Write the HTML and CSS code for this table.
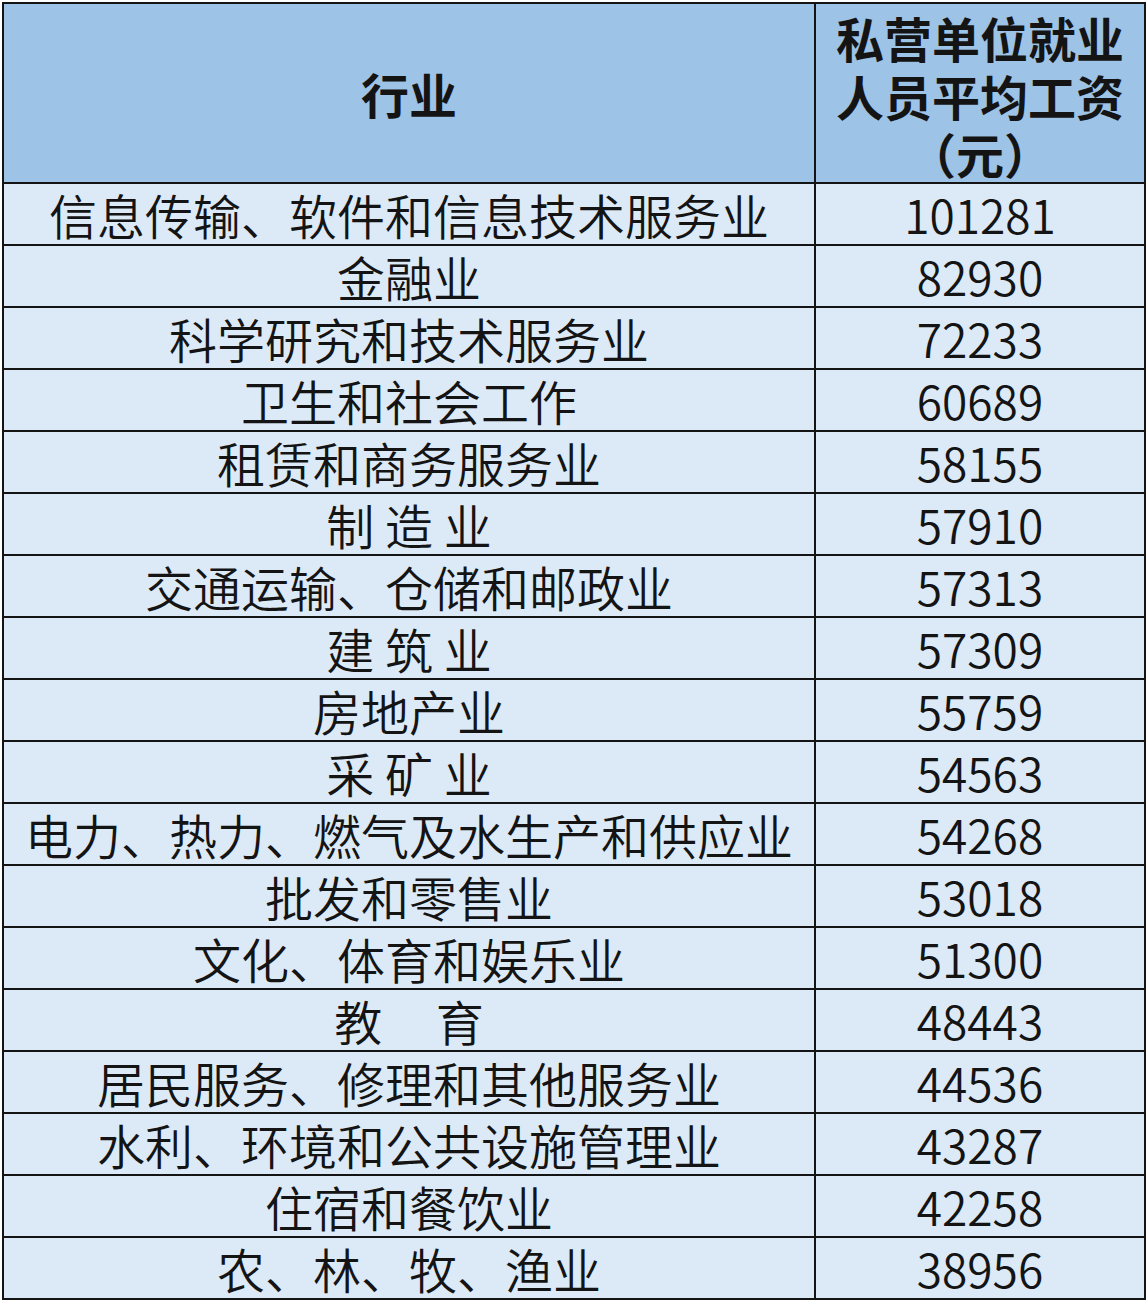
FILE: index.html
```html
<!DOCTYPE html>
<html lang="zh-CN">
<head>
<meta charset="utf-8">
<title>私营单位就业人员平均工资</title>
<link rel="stylesheet" href="styles.css">
</head>
<body>
<div class="sheet">
  <div class="cell head head-name">行业</div>
  <div class="cell head head-value"><div class="head-lines"><div>私营单位就业</div><div>人员平均工资</div><div>（元）</div></div></div>

  <div class="cell name">信息传输、软件和信息技术服务业</div><div class="cell num">101281</div>
  <div class="cell name">金融业</div><div class="cell num">82930</div>
  <div class="cell name">科学研究和技术服务业</div><div class="cell num">72233</div>
  <div class="cell name">卫生和社会工作</div><div class="cell num">60689</div>
  <div class="cell name">租赁和商务服务业</div><div class="cell num">58155</div>
  <div class="cell name">制 造 业</div><div class="cell num">57910</div>
  <div class="cell name">交通运输、仓储和邮政业</div><div class="cell num">57313</div>
  <div class="cell name">建 筑 业</div><div class="cell num">57309</div>
  <div class="cell name">房地产业</div><div class="cell num">55759</div>
  <div class="cell name">采 矿 业</div><div class="cell num">54563</div>
  <div class="cell name">电力、热力、燃气及水生产和供应业</div><div class="cell num">54268</div>
  <div class="cell name">批发和零售业</div><div class="cell num">53018</div>
  <div class="cell name">文化、体育和娱乐业</div><div class="cell num">51300</div>
  <div class="cell name">教     育</div><div class="cell num">48443</div>
  <div class="cell name">居民服务、修理和其他服务业</div><div class="cell num">44536</div>
  <div class="cell name">水利、环境和公共设施管理业</div><div class="cell num">43287</div>
  <div class="cell name">住宿和餐饮业</div><div class="cell num">42258</div>
  <div class="cell name">农、林、牧、渔业</div><div class="cell num">38956</div>
</div>
</body>
</html>
```

FILE: styles.css
```css
html, body {
  margin: 0;
  padding: 0;
  background: #ffffff;
}

.sheet {
  display: grid;
  grid-template-columns: 810px 328px;
  grid-template-rows: 178px repeat(18, 60px);
  gap: 2px;
  padding: 2px;
  margin: 2px 0 0 2px;
  width: fit-content;
  background: #141414;
  font-family: "Noto Sans CJK SC", "Noto Sans", sans-serif;
  color: #141414;
}

.cell {
  display: flex;
  align-items: center;
  justify-content: center;
  background: #dceaf7;
  font-size: 48px;
  line-height: 48px;
  font-weight: 350;
  white-space: pre;
}

.num {
  font-size: 46px;
}

.head {
  background: #9dc3e6;
  font-weight: 700;
  line-height: 58px;
}

.head-value {
  align-items: flex-start;
  padding-top: 4px;
  box-sizing: border-box;
}

.head-lines {
  text-align: center;
  line-height: 58px;
}
```
